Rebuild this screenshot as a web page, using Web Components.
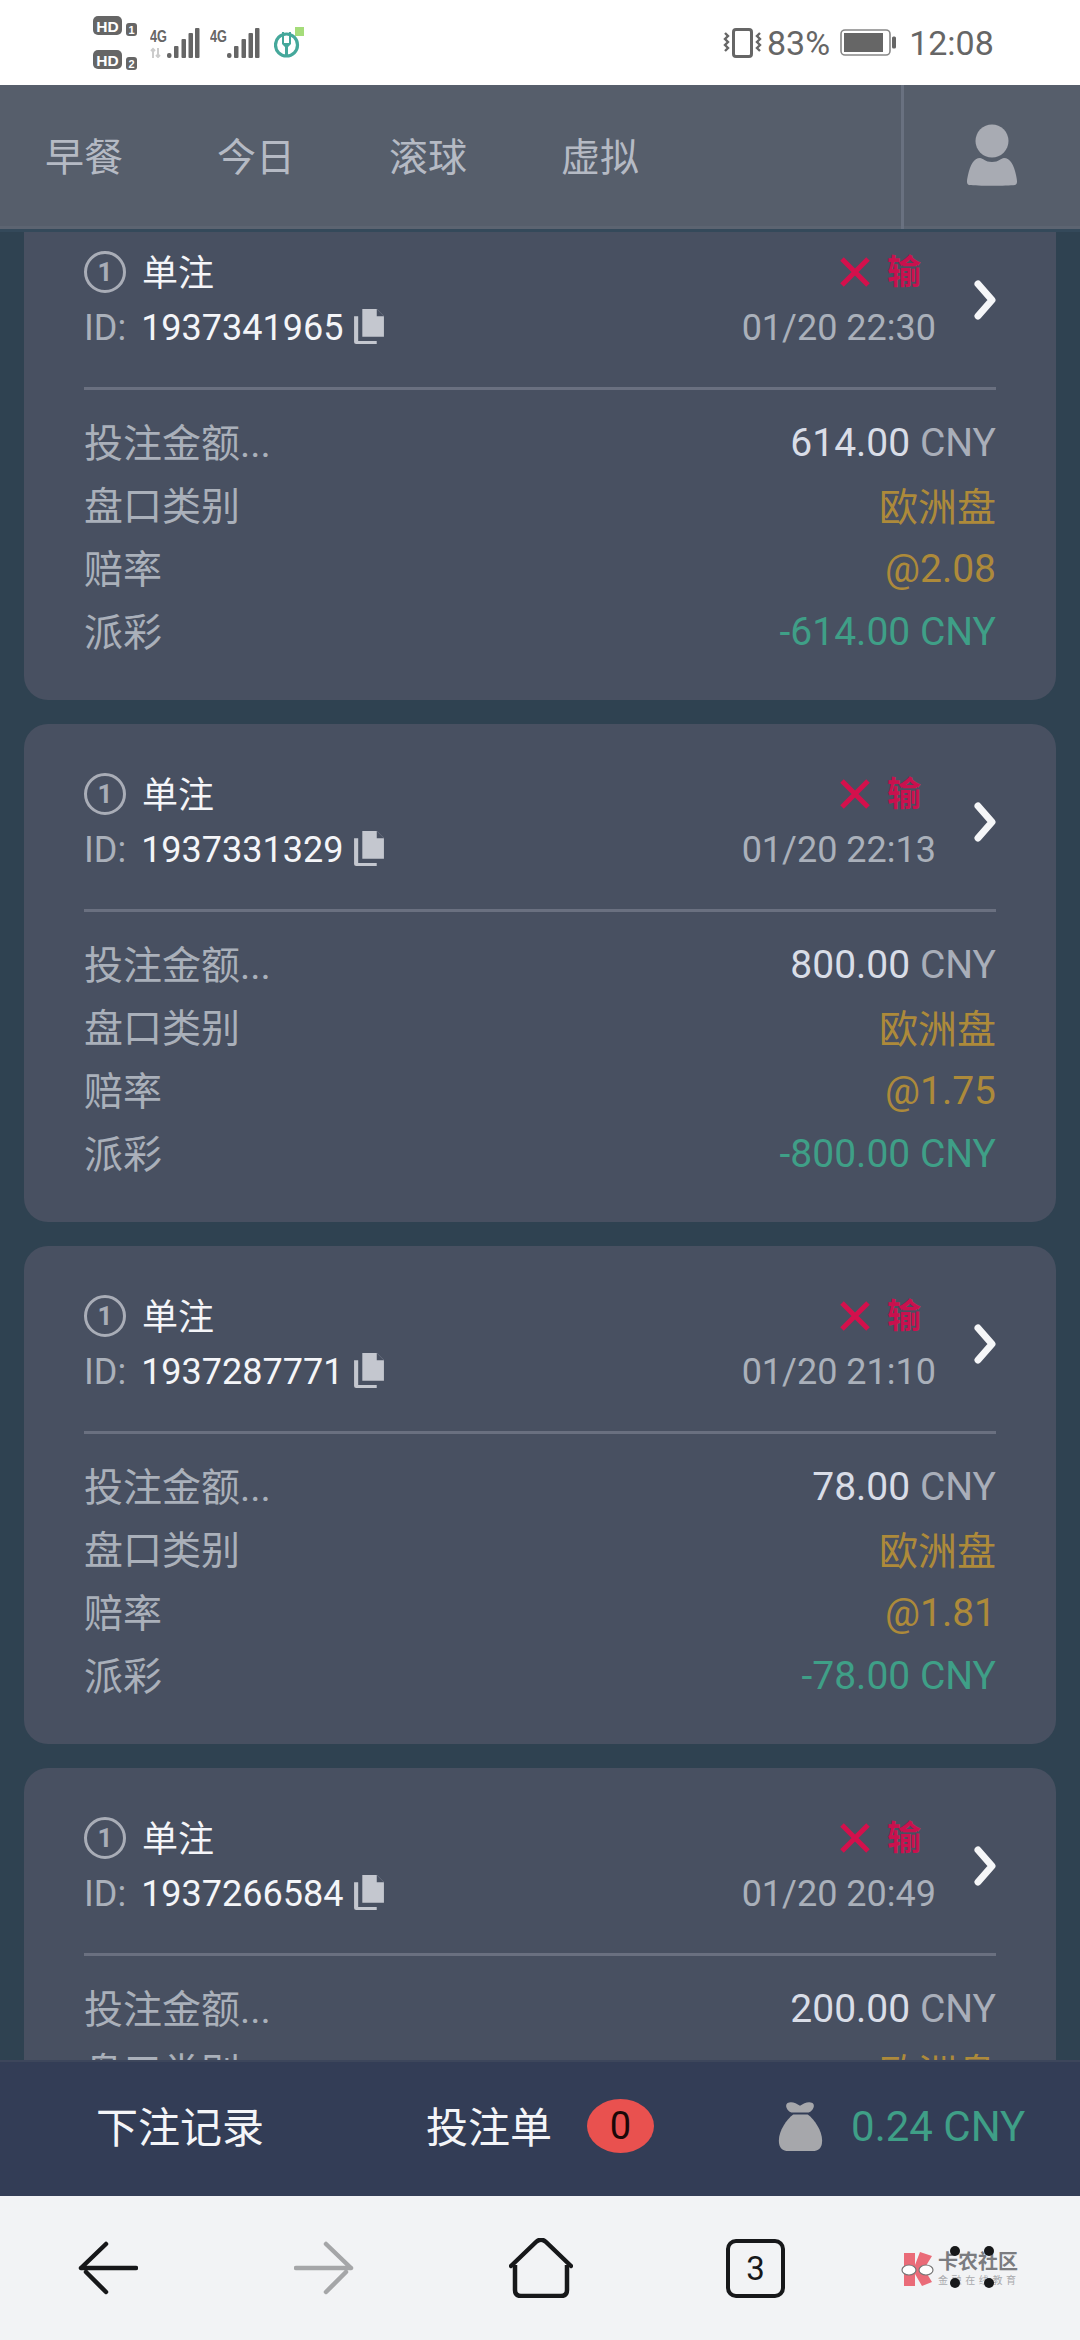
<!DOCTYPE html>
<html lang="zh">
<head>
<meta charset="utf-8">
<title>下注记录</title>
<style>
  html, body { margin: 0; padding: 0; background: #2f4251; }
  body { font-family: Roboto, "Noto Sans CJK SC", sans-serif; }
</style>
</head>
<body>
<app-shell>
  <status-bar></status-bar>
  <top-nav></top-nav>
  <bet-list>
    <bet-card bet-id="1937341965" date="01/20 22:30" stake="614.00" odds="@2.08" payout="-614.00 CNY"></bet-card>
    <bet-card bet-id="1937331329" date="01/20 22:13" stake="800.00" odds="@1.75" payout="-800.00 CNY"></bet-card>
    <bet-card bet-id="1937287771" date="01/20 21:10" stake="78.00" odds="@1.81" payout="-78.00 CNY"></bet-card>
    <!-- last card runs under the bottom bar, its odds and payout rows are never seen -->
    <bet-card bet-id="1937266584" date="01/20 20:49" stake="200.00"></bet-card>
  </bet-list>
  <bet-bar></bet-bar>
  <browser-nav></browser-nav>
</app-shell>

<script>
class AppShell extends HTMLElement {
  constructor() {
    super();
    this.attachShadow({mode: 'open'}).innerHTML = `
      <style>
        :host {
          display: flex;
          flex-direction: column;
          width: 1080px;
          height: 2340px;
          overflow: hidden;
        }
      </style>
      <slot></slot>`;
  }
}

class StatusBar extends HTMLElement {
  constructor() {
    super();
    const signal = `
        <rect x="17" y="25" width="4.5" height="5" rx="2" fill="#666"/>
        <rect x="24" y="18" width="4.5" height="12" rx="1" fill="#666"/>
        <rect x="31.5" y="11" width="4.5" height="19" rx="1" fill="#666"/>
        <rect x="38.5" y="5" width="4.5" height="25" rx="1" fill="#666"/>
        <rect x="45" y="0" width="4.5" height="30" rx="1" fill="#666"/>`;
    this.attachShadow({mode: 'open'}).innerHTML = `
      <style>
        :host {
          display: flex;
          align-items: center;
          height: 85px;
          flex: none;
          background: #fff;
          color: #666;
          font: 34px Roboto, sans-serif;
        }
        svg { display: block; flex: none; }
        .hd { margin-left: 92px; }
        .sim { margin-left: 12px; }
        .sim2 { margin-left: 10px; }
        .agri { margin-left: 14px; }
        .vib { margin-left: 419px; }
        .pct { margin-left: 5px; }
        .bat { margin-left: 10px; }
        .time { margin-left: 13px; }
        text { font-family: "Liberation Sans", sans-serif; font-weight: 700; }
      </style>
      <svg class="hd" width="46" height="54" viewBox="0 0 46 54">
        <rect x="1" y="0" width="29" height="19" rx="5" fill="#666"/>
        <text x="15.5" y="15.5" font-size="15.5" text-anchor="middle" fill="#fff">HD</text>
        <rect x="34" y="7" width="11" height="13" rx="3" fill="#666"/>
        <text x="39.5" y="17.5" font-size="11" text-anchor="middle" fill="#fff">1</text>
        <rect x="1" y="34" width="29" height="19" rx="5" fill="#666"/>
        <text x="15.5" y="49.5" font-size="15.5" text-anchor="middle" fill="#fff">HD</text>
        <rect x="34" y="41" width="11" height="13" rx="3" fill="#666"/>
        <text x="39.5" y="51.5" font-size="11" text-anchor="middle" fill="#fff">2</text>
      </svg>
      <svg class="sim" width="50" height="30" viewBox="0 0 50 30">
        <text x="0" y="14" font-size="17" textLength="17" lengthAdjust="spacingAndGlyphs" fill="#666">4G</text>
        <path d="M3 21v9M1 23l2-2 2 2M8 20v9M6 27l2 2 2-2" fill="none" stroke="#ccc" stroke-width="2"/>
        ${signal}
      </svg>
      <svg class="sim2" width="50" height="30" viewBox="0 0 50 30">
        <text x="0" y="14" font-size="17" textLength="17" lengthAdjust="spacingAndGlyphs" fill="#666">4G</text>
        ${signal}
      </svg>
      <svg class="agri" width="30" height="31" viewBox="0 0 30 31">
        <circle cx="12.5" cy="18" r="11" fill="none" stroke="#45a89b" stroke-width="3.2"/>
        <path d="M8 5v12l3 3v10h3V20l3-3V5h-2v11h-5V5z" fill="#45a89b"/>
        <rect x="21" y="0" width="9" height="9" fill="#a5dc7a"/>
      </svg>
      <svg class="vib" width="39" height="30" viewBox="0 0 39 30">
        <rect x="10.5" y="1.5" width="18" height="27" rx="2.5" fill="none" stroke="#666" stroke-width="3"/>
        <path d="M2 5l3 3-3 3 3 3-3 3 3 3-3 3" fill="none" stroke="#666" stroke-width="2.4"/>
        <path d="M37 5l-3 3 3 3-3 3 3 3-3 3 3 3" fill="none" stroke="#666" stroke-width="2.4"/>
      </svg>
      <span class="pct">83%</span>
      <svg class="bat" width="56" height="27" viewBox="0 0 56 27">
        <rect x="1" y="1" width="49" height="25" rx="4" fill="none" stroke="#888" stroke-width="1.6"/>
        <rect x="4" y="4" width="39" height="19" fill="#666"/>
        <rect x="52" y="7.5" width="4" height="12" rx="1.5" fill="#666"/>
      </svg>
      <span class="time">12:08</span>`;
  }
}

class TopNav extends HTMLElement {
  constructor() {
    super();
    this.attachShadow({mode: 'open'}).innerHTML = `
      <style>
        :host {
          display: flex;
          flex: none;
          height: 147px;
          box-sizing: border-box;
          background: #565e6b;
          border-bottom: 3px solid #34495a;
          box-shadow: inset 0 -3px 0 #5c6471;
          color: #b5bac4;
          font: 39px "Noto Sans CJK SC", sans-serif;
          position: relative;
          z-index: 2;
        }
        .tabs { display: flex; align-items: center; padding: 0 0 7px 45px; width: 901px; box-sizing: border-box; flex: none; }
        .tabs span { width: 172px; flex: none; }
        .user {
          flex: 1;
          display: flex;
          align-items: center;
          justify-content: center;
          border-left: 3px solid #697180;
        }
        .user svg { display: block; margin-top: -5px; }
      </style>
      <div class="tabs"><span>早餐</span><span>今日</span><span>滚球</span><span>虚拟</span></div>
      <div class="user">
        <svg width="50" height="62" viewBox="0 0 50 62">
          <circle cx="25" cy="17" r="16.5" fill="#a8abb3"/>
          <path d="M2 61C-1 60 0 56 1 51 3 41 7 34 13 34c3 0 5 4 12 4s9-4 12-4c6 0 10 7 12 17 1 5 2 9-1 10-8 1-38 1-46 0z" fill="#a8abb3"/>
        </svg>
      </div>`;
  }
}

class BetList extends HTMLElement {
  constructor() {
    super();
    this.attachShadow({mode: 'open'}).innerHTML = `
      <style>
        :host {
          display: block;
          flex: 1;
          min-height: 0;
          overflow: hidden;
          background: #2f4251;
        }
        .scroll {
          display: flex;
          flex-direction: column;
          gap: 24px;
          padding: 0 24px;
          margin-top: -30px;
        }
      </style>
      <div class="scroll"><slot></slot></div>`;
  }
}

class BetRow extends HTMLElement {
  constructor() {
    super();
    this.attachShadow({mode: 'open'}).innerHTML = `
      <style>
        :host {
          display: flex;
          justify-content: space-between;
          align-items: center;
          height: 63px;
          font-size: 39px;
          color: #aab0ba;
        }
        .label { padding-bottom: 5px; }
        :host([cjk]) .value { padding-bottom: 4px; }
        :host([tone=stake]) .value { color: #d9dde7; }
        :host([tone=amber]) .value { color: #ad8a3a; }
        :host([tone=green]) .value { color: #3f9f87; }
      </style>
      <span class="label"><slot name="label"></slot></span>
      <span class="value"><slot></slot></span>`;
  }
}

class BetCard extends HTMLElement {
  constructor() {
    super();
    const d = name => this.getAttribute(name);
    const lower = d('odds') ? `
      <bet-row tone="amber"><span slot="label">赔率</span>${d('odds')}</bet-row>
      <bet-row tone="green"><span slot="label">派彩</span>${d('payout')}</bet-row>` : '';
    this.attachShadow({mode: 'open'}).innerHTML = `
      <style>
        :host {
          display: block;
          flex: none;
          box-sizing: border-box;
          height: 498px;
          padding: 42px 60px 0 60px;
          border-radius: 24px;
          background: #485061;
          font-family: Roboto, "Noto Sans CJK SC", sans-serif;
        }
        .head { position: relative; height: 112px; }
        .line { display: flex; align-items: center; justify-content: space-between; height: 56px; padding-right: 60px; }
        .left { display: flex; align-items: center; }
        .num {
          box-sizing: border-box;
          width: 42px;
          height: 42px;
          margin-right: 16px;
          border: 3px solid #a9adb7;
          border-radius: 50%;
          color: #a9adb7;
          font: 700 26px/36px Roboto, sans-serif;
          text-align: center;
        }
        .title { color: #f4f5f8; font-size: 36px; padding-bottom: 5px; }
        .lost { display: flex; align-items: center; gap: 17px; padding-right: 15px; color: #c9114e; font-size: 34px; font-weight: 700; }
        .lost span { padding-bottom: 5px; }
        .lost svg { display: block; }
        .id { font-size: 36px; color: #aab0ba; }
        .id b { font-weight: 400; color: #f4f5f8; margin-left: 15px; }
        .copy { display: block; margin-left: 11px; margin-top: -4px; }
        .date { color: #aab0ba; font-size: 36px; }
        .arrow { position: absolute; right: 0; top: 36px; display: block; }
        hr { height: 3px; margin: 31px 0 21px; border: 0; background: #6a7080; }
        .cny { color: #a9aeb9; }
      </style>
      <div class="head">
        <div class="line">
          <div class="left"><div class="num">1</div><span class="title">单注</span></div>
          <div class="lost">
            <svg width="30" height="30" viewBox="0 0 30 30"><path d="M2 2l26 26M28 2L2 28" stroke="#d4104c" stroke-width="5"/></svg>
            <span>输</span>
          </div>
        </div>
        <div class="line">
          <div class="left">
            <span class="id">ID:<b>${d('bet-id')}</b></span>
            <svg class="copy" width="30" height="35" viewBox="0 0 29 34">
              <path d="M8 0h14l7 7v20H8z" fill="#c4c7cf"/>
              <path d="M22 0v7h7z" fill="#485061"/>
              <path d="M0 7h4v24h18v3H2a2 2 0 0 1-2-2z" fill="#c4c7cf"/>
            </svg>
          </div>
          <span class="date">${d('date')}</span>
        </div>
        <svg class="arrow" width="22" height="40" viewBox="0 0 22 40">
          <path d="M4 4l14 16L4 36" fill="none" stroke="#f5f6f8" stroke-width="7" stroke-linecap="round" stroke-linejoin="round"/>
        </svg>
      </div>
      <hr>
      <bet-row tone="stake"><span slot="label">投注金额...</span>${d('stake')} <span class="cny">CNY</span></bet-row>
      <bet-row tone="amber" cjk><span slot="label">盘口类别</span>欧洲盘</bet-row>${lower}`;
  }
}

class BetBar extends HTMLElement {
  constructor() {
    super();
    this.attachShadow({mode: 'open'}).innerHTML = `
      <style>
        :host {
          display: flex;
          align-items: center;
          flex: none;
          height: 136px;
          box-sizing: border-box;
          padding-bottom: 6px;
          border-top: 2px solid #3d465b;
          background: #333d56;
          color: #f4f5f8;
          font: 42px Roboto, "Noto Sans CJK SC", sans-serif;
        }
        .rec { margin-left: 96px; padding-bottom: 4px; }
        .slip { margin-left: 162px; padding-bottom: 4px; }
        .badge {
          width: 67px;
          height: 54px;
          margin-left: 35px;
          border-radius: 50%;
          background: #e9514f;
          color: #1a0808;
          font-size: 38px;
          line-height: 54px;
          text-align: center;
        }
        .bag { display: block; margin-left: 124px; }
        .bal { margin-left: 28px; color: #3f9f87; white-space: nowrap; }
      </style>
      <span class="rec">下注记录</span>
      <span class="slip">投注单</span>
      <span class="badge">0</span>
      <svg class="bag" width="45" height="50" viewBox="0 0 45 52">
        <path d="M9 2c4-2 9 0 13 3 4-3 9-5 13-3 3 2 1 8-4 10H13C8 10 6 4 9 2z" fill="#a6a7ab"/>
        <path d="M15 14h15c7 5 15 17 15 27 0 8-4 11-10 11H10C4 52 0 49 0 41c0-10 8-22 15-27z" fill="#a6a7ab"/>
      </svg>
      <span class="bal">0.24 CNY</span>`;
  }
}

class BrowserNav extends HTMLElement {
  constructor() {
    super();
    this.attachShadow({mode: 'open'}).innerHTML = `
      <style>
        :host {
          display: flex;
          align-items: center;
          flex: none;
          height: 144px;
          background: #f2f3f5;
        }
        svg { display: block; flex: none; }
        .back { margin-left: 78px; }
        .fwd { margin-left: 156px; }
        .home { margin-left: 155px; }
        .tabs {
          box-sizing: border-box;
          width: 59px;
          height: 59px;
          margin-left: 153px;
          border: 4px solid #17181a;
          border-radius: 10px;
          color: #17181a;
          font: 33px/51px Roboto, sans-serif;
          text-align: center;
        }
        .logo {
          display: flex;
          align-items: center;
          gap: 4px;
          margin-left: 116px;
          position: relative;
        }
        .words { display: flex; flex-direction: column; gap: 2px; color: #7b7c80; font-family: "Noto Sans CJK SC", sans-serif; }
        .big { font-size: 20px; line-height: 22px; font-weight: 700; white-space: nowrap; }
        .small { font-size: 10px; line-height: 12px; color: #a9aaad; letter-spacing: 3.6px; white-space: nowrap; }
        .dot { position: absolute; width: 10px; height: 10px; border-radius: 50%; background: #17181a; }
      </style>
      <svg class="back" width="60" height="54" viewBox="0 0 60 54">
        <path d="M58 27H3M28 3L3 27M28 51L8 31" fill="none" stroke="#17181a" stroke-width="4.5" stroke-linecap="round" stroke-linejoin="round"/>
      </svg>
      <svg class="fwd" width="60" height="54" viewBox="0 0 60 54">
        <path d="M2 27h55M32 3l25 24M32 51l20-20" fill="none" stroke="#a5a6a8" stroke-width="4.5" stroke-linecap="round" stroke-linejoin="round"/>
      </svg>
      <svg class="home" width="64" height="60" viewBox="0 0 64 60">
        <path d="M2 28L27 4c3-3 7-3 10 0l25 24" fill="none" stroke="#17181a" stroke-width="4.5" stroke-linecap="round"/>
        <path d="M6 27v25c0 4 2 6 6 6h40c4 0 6-2 6-6V27" fill="none" stroke="#17181a" stroke-width="4.5"/>
      </svg>
      <div class="tabs">3</div>
      <div class="logo">
        <svg width="33" height="36" viewBox="0 0 33 36">
          <path d="M3 3h11v12L19 2l12 4-8 13 8 13-10 4-7-12v12H3z" fill="#ea6b78"/>
          <ellipse cx="8" cy="20" rx="7" ry="5" fill="#fff" stroke="#777" stroke-width="1.2"/>
          <ellipse cx="25" cy="20" rx="7" ry="5" fill="#fff" stroke="#777" stroke-width="1.2"/>
        </svg>
        <div class="words"><span class="big">卡农社区</span><span class="small">金融在线教育</span></div>
        <i class="dot" style="left:49px;top:-4px"></i>
        <i class="dot" style="left:83px;top:-4px"></i>
        <i class="dot" style="left:49px;top:28px"></i>
        <i class="dot" style="left:83px;top:28px"></i>
      </div>`;
  }
}

customElements.define('app-shell', AppShell);
customElements.define('status-bar', StatusBar);
customElements.define('top-nav', TopNav);
customElements.define('bet-list', BetList);
customElements.define('bet-row', BetRow);
customElements.define('bet-card', BetCard);
customElements.define('bet-bar', BetBar);
customElements.define('browser-nav', BrowserNav);
</script>
</body>
</html>
